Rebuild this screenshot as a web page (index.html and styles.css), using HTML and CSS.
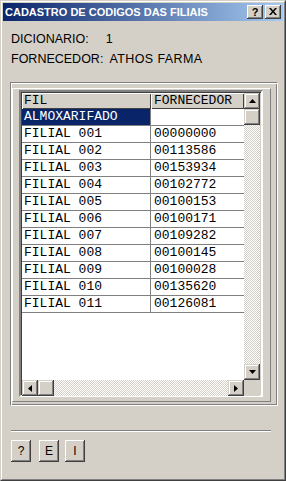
FILE: index.html
```html
<!DOCTYPE html>
<html>
<head>
<meta charset="utf-8">
<link rel="stylesheet" href="styles.css">
</head>
<body>
<div class="window">
  <div class="frame">
    <div class="titlebar">
      <span class="title">CADASTRO DE CODIGOS DAS FILIAIS</span>
      <div class="tb-buttons">
        <span class="tb-btn">?</span>
        <span class="tb-btn"><svg width="8" height="7" viewBox="0 0 8 7"><path d="M0 0h2l2 2.5L6 0h2L5 3.5 8 7H6L4 4.5 2 7H0l3-3.5z" fill="#000"/></svg></span>
      </div>
    </div>
    <div class="body">
      <div class="info"><span class="lbl">DICIONARIO:</span><span class="val v1">1</span></div>
      <div class="info"><span class="lbl">FORNECEDOR:</span><span class="val v2">ATHOS FARMA</span></div>
      <div class="group">
        <div class="panel">
          <div class="grid">
            <div class="data">
              <div class="row head"><div class="c1 hc">FIL</div><div class="c2 hc">FORNECEDOR</div></div>
              <div class="row sel"><div class="c1">ALMOXARIFADO</div><div class="c2"></div></div>
              <div class="row"><div class="c1">FILIAL 001</div><div class="c2">00000000</div></div>
              <div class="row"><div class="c1">FILIAL 002</div><div class="c2">00113586</div></div>
              <div class="row"><div class="c1">FILIAL 003</div><div class="c2">00153934</div></div>
              <div class="row"><div class="c1">FILIAL 004</div><div class="c2">00102772</div></div>
              <div class="row"><div class="c1">FILIAL 005</div><div class="c2">00100153</div></div>
              <div class="row"><div class="c1">FILIAL 006</div><div class="c2">00100171</div></div>
              <div class="row"><div class="c1">FILIAL 007</div><div class="c2">00109282</div></div>
              <div class="row"><div class="c1">FILIAL 008</div><div class="c2">00100145</div></div>
              <div class="row"><div class="c1">FILIAL 009</div><div class="c2">00100028</div></div>
              <div class="row"><div class="c1">FILIAL 010</div><div class="c2">00135620</div></div>
              <div class="row"><div class="c1">FILIAL 011</div><div class="c2">00126081</div></div>
            </div>
            <div class="vscroll">
              <div class="sbtn"><svg width="7" height="4" viewBox="0 0 7 4"><path d="M3.5 0L7 4H0z" fill="#000"/></svg></div>
              <div class="sbtn"></div>
              <div class="track"></div>
              <div class="sbtn"><svg width="7" height="4" viewBox="0 0 7 4"><path d="M0 0h7L3.5 4z" fill="#000"/></svg></div>
            </div>
            <div class="hscroll">
              <div class="sbtn"><svg width="4" height="7" viewBox="0 0 4 7"><path d="M4 0v7L0 3.5z" fill="#000"/></svg></div>
              <div class="sbtn"></div>
              <div class="track"></div>
              <div class="sbtn"><svg width="4" height="7" viewBox="0 0 4 7"><path d="M0 0v7l4-3.5z" fill="#000"/></svg></div>
            </div>
            <div class="corner"></div>
          </div>
        </div>
      </div>
      <div class="sep"></div>
      <div class="actions">
        <button class="btn">?</button>
        <button class="btn b2">E</button>
        <button class="btn b3">I</button>
      </div>
    </div>
  </div>
</div>
</body>
</html>
```

FILE: styles.css
```css
* { box-sizing: border-box; }
html, body { margin: 0; padding: 0; background: #D4D0C8; }
body { font-family: "Liberation Sans", Arial, sans-serif; }

.window {
  width: 286px;
  height: 481px;
  border: 1px solid;
  border-color: #D4D0C8 #404040 #404040 #D4D0C8;
  background: #D4D0C8;
}
.frame {
  height: 100%;
  border: 1px solid;
  border-color: #fff #808080 #808080 #fff;
  padding: 1px;
}
.titlebar {
  height: 18px;
  display: flex;
  align-items: center;
  justify-content: space-between;
  background: linear-gradient(to right, #0A246A, #A6CAF0);
  padding: 0 2px 0 2px;
}
.title {
  color: #fff;
  font-weight: bold;
  font-size: 11px;
  line-height: 18px;
}
.tb-buttons { display: flex; gap: 2px; }
.tb-btn {
  width: 16px;
  height: 14px;
  background: #D4D0C8;
  box-shadow: inset -1px -1px #404040, inset 1px 1px #fff, inset -2px -2px #808080;
  display: flex;
  align-items: center;
  justify-content: center;
  font-weight: bold;
  font-size: 11px;
  line-height: 14px;
  color: #000;
  padding-bottom: 1px;
}

.body { padding: 8px 0 0 0; }
.info {
  height: 20px;
  line-height: 20px;
  font-size: 12.5px;
  color: #000;
  padding-left: 8px;
  display: flex;
}
.v1 { margin-left: 17px; }
.v2 { margin-left: 6px; letter-spacing: 0.4px; }

.group {
  margin: 13px 0 0 7px;
  width: 268px;
  height: 324px;
  border: 1px solid;
  border-color: #808080 #fff #fff #808080;
  box-shadow: inset 1px 1px #fff, inset -1px -1px #808080;
  padding: 1px;
}
.panel {
  margin-top: 4px;
  width: 259px;
  height: 314px;
  border: 1px solid;
  border-color: #fff #808080 #808080 #fff;
}
.grid {
  margin: 1px 0 0 6px;
  width: 244px;
  height: 307px;
  border: 2px solid;
  border-color: #808080 #fff #fff #808080;
  box-shadow: inset 1px 1px #404040, inset -1px -1px #D4D0C8;
  padding: 1px;
  display: grid;
  grid-template-columns: 222px 16px;
  grid-template-rows: 287px 16px;
  background: #D4D0C8;
}
.data {
  background: #fff;
  overflow: hidden;
  font-family: "Liberation Mono", "Courier New", monospace;
  font-size: 13px;
  color: #000;
}
.row { display: flex; height: 17px; border-bottom: 1px solid #808080; }
.c1 {
  width: 129px;
  flex: none;
  border-right: 1px solid #808080;
  padding-left: 2px;
  line-height: 16px;
  white-space: pre;
}
.c2 {
  flex: 1;
  padding-left: 3px;
  line-height: 16px;
  white-space: pre;
}
.row.head { height: 16px; border-bottom: none; }
.hc {
  background: #D4D0C8;
  border: none;
  box-shadow: inset 1px 1px #fff, inset -1px -1px #404040;
  line-height: 16px;
}
.head .c1 { width: 129px; }
.sel .c1 { background: #0A246A; color: #fff; }

.vscroll {
  display: flex;
  flex-direction: column;
}
.hscroll { display: flex; }
.sbtn {
  flex: none;
  width: 16px;
  height: 16px;
  background: #D4D0C8;
  box-shadow: inset -1px -1px #404040, inset 1px 1px #D4D0C8, inset -2px -2px #808080, inset 2px 2px #fff;
  display: flex;
  align-items: center;
  justify-content: center;
}
.sbtn svg { display: block; }
.track {
  flex: 1;
  background-color: #fff;
  background-image: repeating-conic-gradient(#D4D0C8 0 25%, #fff 0 50%);
  background-size: 2px 2px;
}
.corner { background: #D4D0C8; }

.sep {
  margin: 24px 0 0 8px;
  width: 260px;
  height: 2px;
  border-top: 1px solid #808080;
  border-bottom: 1px solid #fff;
}
.actions {
  display: flex;
  margin: 8px 0 0 8px;
}
.btn {
  width: 20px;
  height: 22px;
  padding: 0;
  margin: 0;
  border: none;
  background: #D4D0C8;
  box-shadow: inset -1px -1px #404040, inset 1px 1px #fff, inset -2px -2px #808080;
  font-family: "Liberation Sans", Arial, sans-serif;
  font-size: 12px;
  color: #000;
}
.b2 { margin-left: 8px; }
.b3 { margin-left: 6px; }
```
